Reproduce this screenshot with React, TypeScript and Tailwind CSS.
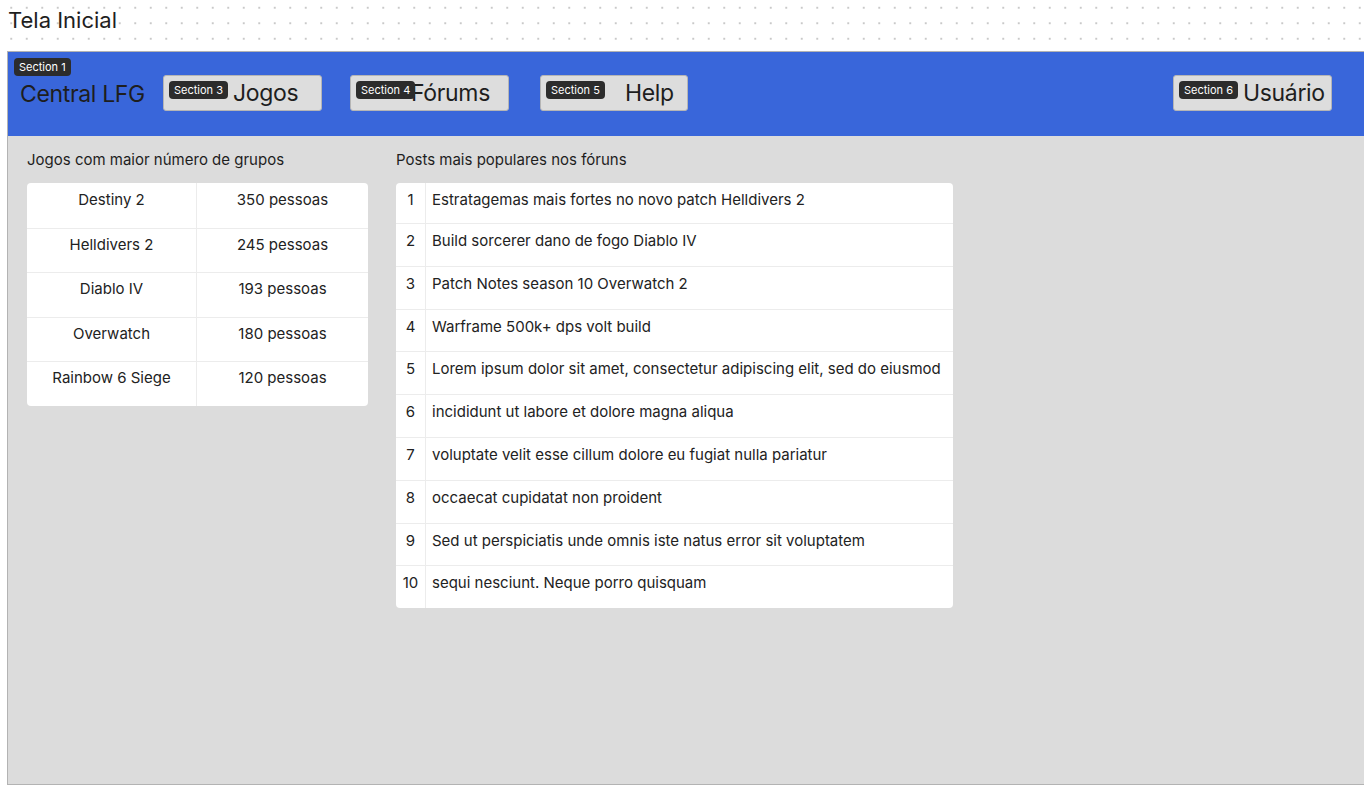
import React from 'react';

const jogos = [
  { nome: 'Destiny 2', pessoas: '350 pessoas' },
  { nome: 'Helldivers 2', pessoas: '245 pessoas' },
  { nome: 'Diablo IV', pessoas: '193 pessoas' },
  { nome: 'Overwatch', pessoas: '180 pessoas' },
  { nome: 'Rainbow 6 Siege', pessoas: '120 pessoas' },
];

const posts = [
  'Estratagemas mais fortes no novo patch Helldivers 2',
  'Build sorcerer dano de fogo Diablo IV',
  'Patch Notes season 10 Overwatch 2',
  'Warframe 500k+ dps volt build',
  'Lorem ipsum dolor sit amet, consectetur adipiscing elit, sed do eiusmod',
  'incididunt ut labore et dolore magna aliqua',
  'voluptate velit esse cillum dolore eu fugiat nulla pariatur',
  'occaecat cupidatat non proident',
  'Sed ut perspiciatis unde omnis iste natus error sit voluptatem',
  'sequi nesciunt. Neque porro quisquam',
];

const Badge: React.FC<{ label: string; className?: string }> = ({ label, className = '' }) => (
  <span
    className={`absolute rounded-[4px] bg-[#2c2c2c] px-[5px] text-[11px] leading-[18px] text-white ${className}`}
  >
    {label}
  </span>
);

interface NavButtonProps {
  section: string;
  label: string;
  width: string;
  textPad: string;
  margin: string;
}

const NavButton: React.FC<NavButtonProps> = ({ section, label, width, textPad, margin }) => (
  <div
    className={`relative h-[36px] shrink-0 rounded-[3px] border border-[#b5b5b5] bg-[#dddddd] ${width} ${margin}`}
  >
    <Badge label={section} className="left-[5px] top-[5px]" />
    <span className={`block text-[23px] leading-[34px] tracking-[-0.015em] text-[#1e1e1e] ${textPad}`}>
      {label}
    </span>
  </div>
);

export default function App() {
  return (
    <div className="relative h-[790px] w-full overflow-hidden bg-white bg-[radial-gradient(circle,#c9c9c9_0.8px,transparent_1px)] bg-size-[15.5px_15.5px] bg-position-[3.5px_0px] font-['Inter',sans-serif]">
      <div className="pl-[8px] pt-[6px] text-[22px] leading-[28px] text-[#1e1e1e]">Tela Inicial</div>

      <div className="ml-[7px] mt-[17px] h-[734px] w-[1400px] border-b border-l border-t border-[#b3b3b3] bg-[#dcdcdc]">
        <header className="relative flex h-[84px] items-start bg-[#3966da] pt-[23px]">
          <Badge label="Section 1" className="left-[6px] top-[6px]" />
          <div className="ml-[12px] mt-[4px] w-[143px] shrink-0 text-[23px] leading-[30px] tracking-[-0.015em] text-[#1e1e1e]">
            Central LFG
          </div>
          <NavButton section="Section 3" label="Jogos" width="w-[159px]" textPad="pl-[69px]" margin="" />
          <NavButton section="Section 4" label="Fórums" width="w-[159px]" textPad="pl-[60px]" margin="ml-[28px]" />
          <NavButton section="Section 5" label="Help" width="w-[148px]" textPad="pl-[84px]" margin="ml-[31px]" />
          <NavButton section="Section 6" label="Usuário" width="w-[159px]" textPad="pl-[69px]" margin="ml-[485px]" />
        </header>

        <main className="flex items-start gap-[28px] pl-[19px] pt-[14px]">
          <section className="w-[341px]">
            <h2 className="text-[15px] leading-[20px] text-[#1e1e1e]">Jogos com maior número de grupos</h2>
            <div className="mt-[13px] overflow-hidden rounded-[4px] bg-white">
              {jogos.map((j, i) => (
                <div
                  key={j.nome}
                  className={`grid h-[44.6px] grid-cols-[170px_1fr] text-[15px] leading-[20px] text-[#222] ${
                    i > 0 ? 'border-t border-[#ececec]' : ''
                  }`}
                >
                  <div className={`border-r border-[#ececec] text-center ${i > 0 ? 'pt-[6px]' : 'pt-[7px]'}`}>
                    {j.nome}
                  </div>
                  <div className={`text-center ${i > 0 ? 'pt-[6px]' : 'pt-[7px]'}`}>{j.pessoas}</div>
                </div>
              ))}
            </div>
          </section>

          <section className="w-[557px]">
            <h2 className="text-[15px] leading-[20px] text-[#1e1e1e]">Posts mais populares nos fóruns</h2>
            <div className="mt-[13px] overflow-hidden rounded-[4px] bg-white">
              {posts.map((p, i) => (
                <div
                  key={p}
                  className={`grid grid-cols-[30px_1fr] text-[15px] leading-[20px] text-[#222] ${
                    i > 0 ? 'h-[42.8px] border-t border-[#ececec]' : 'h-[40px]'
                  }`}
                >
                  <div className="border-r border-[#ececec] pt-[7px] text-center">{i + 1}</div>
                  <div className="pl-[6px] pt-[7px]">{p}</div>
                </div>
              ))}
            </div>
          </section>
        </main>
      </div>
    </div>
  );
}
